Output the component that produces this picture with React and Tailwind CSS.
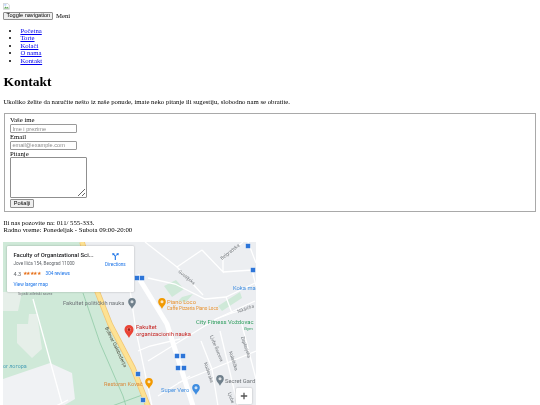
const NAV = ['Početna', 'Torte', 'Kolači', 'O nama', 'Kontakt']

const ROADS = [
  'M145 241L177 266L202 249',
  'M177 266L203 294',
  'M148 277L175 283L205 298L226 296L255 282',
  'M202 249L223 271L223 254',
  'M243 241L222 258',
  'M223 271L252 269L256 285',
  'M226 296L232 312L252 306',
  'M216 318L255 300',
  'M148 360L216 318L232 312',
  'M138 350L150 345L180 338',
  'M201 340L212 368L218 405',
  'M220 330L238 405',
  'M241 320L256 378',
  'M178 382L256 350',
  'M158 395L190 375',
  'M248 241L256 262',
  'M128 275L136 330L152 405',
]

const BLUE = [[137, 277], [142, 277], [248, 245], [253, 269], [177, 355], [183, 355], [178, 367], [184, 367], [138, 373], [143, 399]]

function MapPin({ x, y, color, s = 0.85 }) {
  return (
    <g transform={`translate(${x} ${y}) scale(${s})`}>
      <path d="M0 7C-1 4-4.5 2-4.5-1.5A4.5 4.5 0 0 1 4.5-1.5C4.5 2 1 4 0 7Z" fill={color} />
      <circle cy="-1.5" r="1.8" fill="#fff" fillOpacity="0.75" />
    </g>
  )
}

function MapDrawing() {
  return (
    <svg viewBox="3 241 253 190" className="block w-[253px] h-[190px] font-['Roboto',sans-serif]">
      <rect x="3" y="241" width="253" height="190" fill="#eceef1" />
      {/* park */}
      <path d="M3 241H80L146 405H3Z" fill="#cfe9d8" />
      <path d="M3 378L50 362L72 372L75 398L63 405H3Z" fill="#f0f2f4" />
      <path d="M17 323H28L29 313H37L42 348L32 357L17 342Z" fill="#e6efe9" />
      <path d="M3 291H22L18 310H3Z" fill="#e6efe9" />
      <path d="M164 285L176 279L184 288L172 296Z" fill="#cfe9d8" />
      <path d="M182 296L193 293L186 301L178 300Z" fill="#cfe9d8" />
      <path d="M218 305L240 291L242 297L222 310Z" fill="#cfe9d8" />
      <path d="M83 292L100 342L123 395L126 405M112 405L145 393" fill="none" stroke="#8fcaa6" strokeWidth="0.8" />
      {/* roads */}
      <path d="M33 298L62 403M56 405L68 399" fill="none" stroke="#fff" strokeWidth="1.3" />
      {ROADS.map(d => (
        <path key={d} d={d} fill="none" stroke="#fff" strokeWidth="1.3" />
      ))}
      <path d="M137 274L167 323L193 405" fill="none" stroke="#fff" strokeWidth="5" />
      <path d="M82 241L95 285L110 323L133 367L148 405" fill="none" stroke="#f3c574" strokeWidth="5.5" />
      <path d="M82 241L95 285L110 323L133 367L148 405" fill="none" stroke="#fde293" strokeWidth="4" />
      {BLUE.map(([x, y]) => (
        <rect key={`${x}-${y}`} x={x - 2.5} y={y - 2.5} width="5" height="5" rx="1" fill="#2d75d8" stroke="#fff" strokeWidth="0.5" />
      ))}

      <text x="18" y="294" fontSize="3.8" fill="#70757a">Srpski atletski savez</text>
      <text x="63" y="304" fontSize="5.7" fill="#6f7478">Fakultet političkih nauka</text>
      <MapPin x={132} y={302} color="#70808c" />
      <text x="3" y="367" fontSize="5.4" fill="#4aa0b5">or логора</text>
      <text fontSize="4.8" fill="#4a4a3a" transform="translate(105 327) rotate(64)">Bulevar Oslobođenja</text>
      <text x="104" y="385" fontSize="5.6" fill="#d98a3d">Restoran Kovač</text>
      <MapPin x={149} y={382} color="#f29900" />

      <MapPin x={129} y={330} color="#ea4335" s={1} />
      <circle cx="129" cy="328.5" r="1.5" fill="#a61b12" />
      <text x="136" y="328" fontSize="5.8" fill="#c5221f">Fakultet</text>
      <text x="136" y="335" fontSize="5.8" fill="#c5221f">organizacionih nauka</text>

      <MapPin x={162} y={302} color="#f29900" />
      <text x="167" y="303" fontSize="5.8" fill="#e8912d">Piano Loco</text>
      <text x="167" y="309" fontSize="4.5" fill="#e8912d">Caffe Pizzeria Piano Loco</text>
      <text x="233" y="289" fontSize="5.8" fill="#3f8de0">Koka ma</text>
      <text x="196" y="323" fontSize="5.9" fill="#2f9e5f">City Fitness Voždovac</text>
      <text x="244" y="329" fontSize="4.4" fill="#2f9e5f">Gym</text>
      <MapPin x={220} y={379} color="#70808c" />
      <text x="225" y="382" fontSize="5.8" fill="#6f7478">Secret Gard</text>
      <text x="161" y="391" fontSize="5.8" fill="#3f8de0">Super Vero</text>
      <MapPin x={196} y={388} color="#3f8de0" />

      <text fontSize="4.6" fill="#70757a" transform="translate(178 271) rotate(40)">Gostiljska</text>
      <text fontSize="4.6" fill="#70757a" transform="translate(222 259) rotate(-38)">Belgradska</text>
      <text fontSize="4.6" fill="#70757a" transform="translate(238 312) rotate(-20)">Nikšićka</text>
      <text fontSize="4.6" fill="#70757a" transform="translate(210 335) rotate(68)">Ljube Šercera</text>
      <text fontSize="4.6" fill="#70757a" transform="translate(204 362) rotate(72)">Kozlovska</text>
      <text fontSize="4.6" fill="#70757a" transform="translate(229 351) rotate(72)">Kolašička</text>
      <text fontSize="4.6" fill="#70757a" transform="translate(241 336) rotate(72)">Zaplanjska</text>
      <text fontSize="4.6" fill="#70757a" transform="translate(228 392) rotate(72)">Ljube</text>
    </svg>
  )
}

function MapCard() {
  return (
    <div className="absolute left-[4px] top-[4px] w-[127px] h-[46px] bg-white shadow-[0_0_2px_rgba(0,0,0,0.3)] rounded-[1px] pl-[6px] pt-[5px] font-['Roboto',sans-serif]">
      <div className="flex">
        <div className="w-[91px] shrink-0">
          <p className="text-[5.9px] leading-[8px] font-medium text-[#202124] whitespace-nowrap">Faculty of Organizational Sci...</p>
          <p className="text-[4.6px] leading-[7px] text-[#5f6368] whitespace-nowrap mt-[1px]">Jove Ilića 154, Beograd 11000</p>
          <p className="text-[5.5px] leading-[8px] text-[#5f6368] mt-[3px] flex items-center whitespace-nowrap">
            4.3
            <span className="text-[#e7711b] text-[4.8px] ml-[1.5px] tracking-[-0.4px]">★★★★★</span>
            <span className="text-[#1a73e8] text-[4.6px] ml-[5px]">304 reviews</span>
          </p>
          <p className="text-[4.8px] leading-[7px] text-[#1a73e8] mt-[3px] whitespace-nowrap">View larger map</p>
        </div>
        <div className="flex flex-col items-center w-[24px] ml-[-1px] mt-[1px]">
          <svg viewBox="0 0 24 24" className="w-[9px] h-[9px]">
            <path d="M3 3h7L8 5l5 5v11h-3v-9.5L6 7.5 4.5 9.5ZM21 3h-7l2 2-3 3 2 2 3-3 1.5 2Z" fill="#1a73e8" />
          </svg>
          <span className="text-[4.6px] leading-[6px] text-[#1a73e8] mt-[1px]">Directions</span>
        </div>
      </div>
    </div>
  )
}

export default function App() {
  return (
    <div className="h-[405px] overflow-hidden bg-white text-black p-[3.4px] blur-[0.3px] font-['Liberation_Serif',serif] text-[6.75px] leading-[7.6px]">
      <svg viewBox="0 0 16 16" className="block w-[6.75px] h-[6.75px]">
        <path d="M1 1h10l4 4v10H1Z" fill="#fff" stroke="#9aa0a6" />
        <path d="M2 13l4-5 3 3 2-2 3 4Z" fill="#5fa55a" />
        <path d="M3 3h5v3H3Z" fill="#a8c7fa" />
      </svg>

      <div className="flex items-center mt-[1.5px] h-[8.5px]">
        <button className="h-[8.5px] w-[50px] bg-[#efefef] border border-[#8f8f8f] rounded-[1px] font-['Liberation_Sans',sans-serif] text-[5.6px] leading-none whitespace-nowrap">
          Toggle navigation
        </button>
        <span className="ml-[2.5px]">Meni</span>
      </div>

      <ul className="mt-[6.5px] pl-[17px] list-disc">
        {NAV.map(item => (
          <li key={item}>
            <a href="#" className="text-[#0000ee] underline">{item}</a>
          </li>
        ))}
      </ul>

      <h1 className="mt-[9px] text-[13.5px] leading-[15.5px] font-bold">Kontakt</h1>
      <p className="mt-[9px]">Ukoliko želite da naručite nešto iz naše ponude, imate neko pitanje ili sugestiju, slobodno nam se obratite.</p>

      <fieldset className="mt-[7px] h-[99px] w-[532px] ml-[0.6px] border border-[#a9a9a9] pl-[5px] pt-[2.4px]">
        <label className="block leading-[8px]">Vaše ime</label>
        <input
          placeholder="Ime i prezime"
          className="block w-[67px] h-[9px] border border-[#9a9a9a] rounded-[1px] px-[1.5px] font-['Liberation_Sans',sans-serif] text-[5.6px] placeholder:text-[#8a8a8a]"
        />
        <label className="block leading-[7.5px]">Email</label>
        <input
          placeholder="email@example.com"
          className="block w-[67px] h-[9px] border border-[#9a9a9a] rounded-[1px] px-[1.5px] font-['Liberation_Sans',sans-serif] text-[5.6px] placeholder:text-[#8a8a8a]"
        />
        <label className="block leading-[7.5px]">Pitanje</label>
        <textarea className="block w-[77px] h-[41px] border border-[#8f8f8f] rounded-[1px] resize-y" />
        <button className="block mt-[1px] w-[24px] h-[9px] bg-[#efefef] border border-[#8f8f8f] rounded-[1px] font-['Liberation_Sans',sans-serif] text-[5.6px] leading-none">
          Pošalji
        </button>
      </fieldset>

      <p className="mt-[6.8px]">Ili nas pozovite na: 011/ 555-333.</p>
      <p className="leading-[8.4px]">Radno vreme: Ponedeljak - Subota 09:00-20:00</p>

      <div className="relative mt-[7.5px] w-[253px] h-[190px]">
        <MapDrawing />
        <MapCard />
        <div className="absolute left-[233px] top-[146px] w-[16px] h-[16px] bg-white rounded-[1px] shadow-[0_0_2px_rgba(0,0,0,0.3)] flex items-center justify-center">
          <svg viewBox="0 0 10 10" className="w-[8px] h-[8px]">
            <path d="M5 1v8M1 5h8" stroke="#555" strokeWidth="1.6" />
          </svg>
        </div>
      </div>
    </div>
  )
}
